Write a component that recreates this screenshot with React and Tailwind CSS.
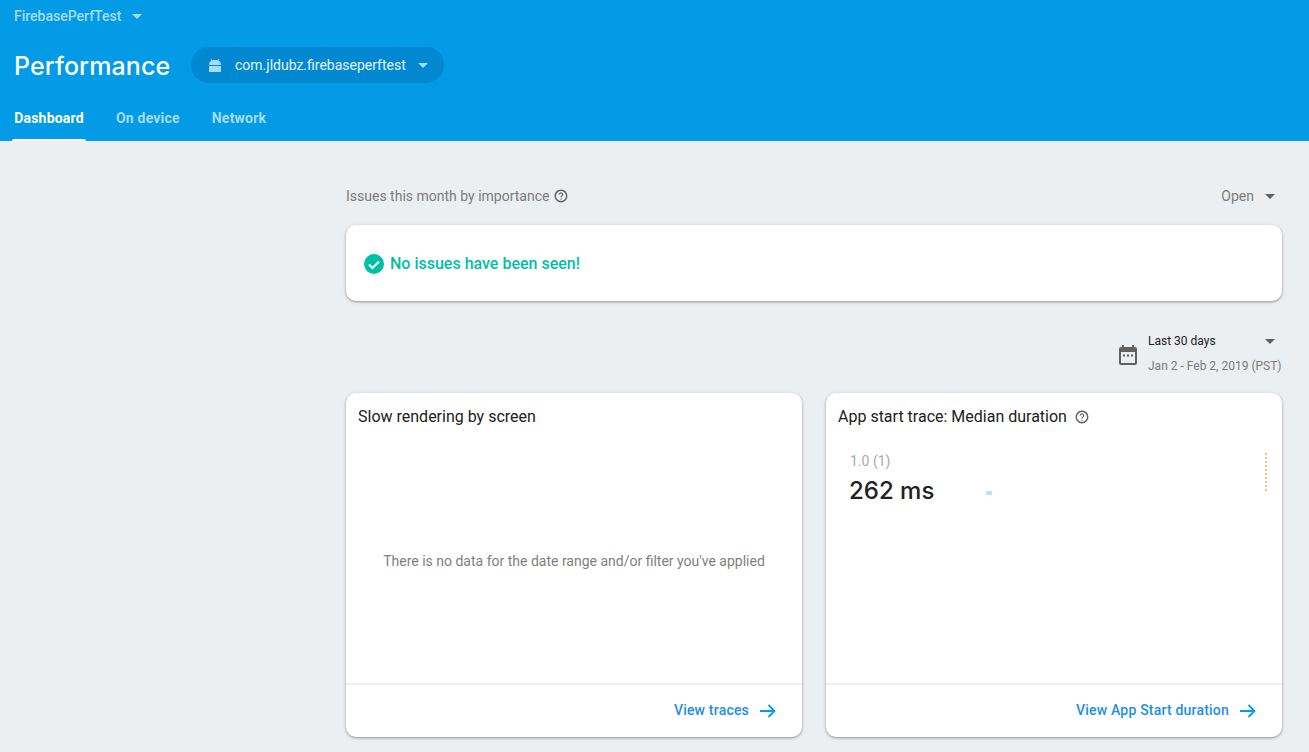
import React from "react"

const Caret = ({ className }) => (
    <svg className={className} width="10" height="5" viewBox="0 0 10 5" fill="currentColor">
        <path d="M0 0h10L5 5z" />
    </svg>
)

const Help = ({ className }) => (
    <svg className={className} width="14" height="14" viewBox="0 0 24 24" fill="currentColor">
        <path d="M12 1C5.900 1 1 5.900 1 12s4.900 11 11 11 11-4.900 11-11S18.100 1 12 1zm0 19.500c-4.700 0-8.500-3.800-8.500-8.500S7.300 3.500 12 3.500s8.500 3.800 8.500 8.500-3.800 8.500-8.500 8.500zM11 16.500h2v2h-2zM12 5.500c-2.200 0-4 1.800-4 4h2c0-1.100.9-2 2-2s2 .9 2 2c0 2-3 1.750-3 5h2c0-2.250 3-2.500 3-5 0-2.200-1.800-4-4-4z" />
    </svg>
)

const Arrow = () => (
    <svg width="16" height="14" viewBox="0 0 16 14" fill="none" stroke="#039be5" strokeWidth="1.8">
        <path d="M0 7h14.500M8.500 1l6 6-6 6" />
    </svg>
)

const Card = ({ children, link }) => (
    <div className="flex flex-col h-[344px] bg-white rounded-[10px] shadow-[0_1px_3px_rgba(0,0,0,0.4)]">
        <div className="flex-1 min-h-0 flex flex-col">{children}</div>
        <div className="h-[54px] border-t-2 border-[#eeeeee] flex items-center justify-end gap-[11px] pr-[26px] pb-[1px]">
            <span className="text-[14px] font-medium text-[#1e8fe5] tracking-[0.2px]">{link}</span>
            <Arrow />
        </div>
    </div>
)

export default function App() {
    return (
        <div className="h-[752px] overflow-hidden bg-[#eceff1] font-['Roboto',sans-serif]">
            <div className="h-[141px] bg-[#039be5] flex flex-col">
                <div className="h-[32px] pl-[14px] flex items-center gap-[10px] text-[#a6dcf6]">
                    <span className="text-[14px] font-medium">FirebasePerfTest</span>
                    <Caret className="mt-[1px] ml-[1px]" />
                </div>
                <div className="h-[36px] mt-[15px] pl-[14px] flex items-center">
                    <h1 className="text-[25px] leading-[36px] pt-[2px] tracking-[0.1px] font-medium text-white w-[177px] font-['Inter',sans-serif]">Performance</h1>
                    <div className="h-[36px] w-[253px] rounded-full bg-[#0288d1] flex items-center pl-[17px]">
                        <svg width="14" height="13" viewBox="0 0 14 13" fill="#a6dcf6">
                            <path d="M1 6C1 3.500 2.200 2.200 3.500 1.500L2.800.3l.4-.3 1.300 1.200C5.800.8 8.200.8 9.500 1.200L10.800 0l.4.3-.7 1.200C11.800 2.200 13 3.500 13 6zM1 7h12v5.500a.5.5 0 0 1-.5.5h-11a.5.5 0 0 1-.5-.5z" />
                        </svg>
                        <span className="ml-[13px] text-[14px] text-[#e3f3fc] font-normal">com.jldubz.firebaseperftest</span>
                        <Caret className="ml-[12px] text-[#a6dcf6]" />
                    </div>
                </div>
                <div className="flex-1 flex items-end pl-[12px] text-[14px] font-bold tracking-[0.2px]">
                    <div className="h-[44px] w-[74px] flex flex-col items-center justify-between text-white">
                        <span className="mt-[11px]">Dashboard</span>
                        <div className="w-full h-[2px] bg-white rounded-t-[2px]" />
                    </div>
                    <div className="h-[44px] ml-[30px] text-[#a6dcf6]">
                        <div className="mt-[11px]">On device</div>
                    </div>
                    <div className="h-[44px] ml-[32px] text-[#a6dcf6]">
                        <div className="mt-[11px]">Network</div>
                    </div>
                </div>
            </div>

            <div className="pl-[346px] pr-[27px]">
                <div className="h-[84px] flex items-start justify-between pt-[45px]">
                    <div className="flex items-center gap-[5px] text-[14px] leading-[20px] text-[#7b7b7b]">
                        <span>Issues this month by importance</span>
                        <Help className="text-[#616161]" />
                    </div>
                    <div className="flex items-center gap-[11px] text-[14px] leading-[20px] text-[#7b7b7b] pr-[7px]">
                        <span>Open</span>
                        <Caret className="text-[#616161]" />
                    </div>
                </div>

                <div className="h-[76px] bg-white rounded-[10px] shadow-[0_1px_3px_rgba(0,0,0,0.4)] flex items-center pl-[18px] pt-[1px] gap-[6px]">
                    <svg width="20" height="20" viewBox="0 0 20 20">
                        <circle cx="10" cy="10" r="10" fill="#00bfa5" />
                        <path d="M5 10.500l3.500 3.500L15 7.500" fill="none" stroke="#fff" strokeWidth="2.200" />
                    </svg>
                    <span className="text-[16px] font-medium text-[#00bfa5]">No issues have been seen!</span>
                </div>

                <div className="h-[92px] flex justify-end items-start pt-[29px]">
                    <div className="flex items-center">
                        <svg className="mr-[11px] mt-[5px]" width="18" height="20" viewBox="0 0 18 20" fill="#616161">
                            <path fillRule="evenodd" d="M3 0h2v2h8V0h2v2h1a2 2 0 0 1 2 2v14a2 2 0 0 1-2 2H2a2 2 0 0 1-2-2V4a2 2 0 0 1 2-2h1zM2 7v11h14V7z" />
                            <path d="M4 9.500h2v2H4zM8 9.500h2v2H8zM12 9.500h2v2h-2z" />
                        </svg>
                        <div className="w-[134px]">
                            <div className="flex items-center justify-between pr-[7px] h-[22px]">
                                <span className="text-[12px] text-[#212121]">Last 30 days</span>
                                <Caret className="text-[#616161]" />
                            </div>
                            <div className="text-[12px] text-[#7b7b7b] mt-[5px] whitespace-nowrap">Jan 2 - Feb 2, 2019 (PST)</div>
                        </div>
                    </div>
                </div>

                <div className="grid grid-cols-2 gap-[24px]">
                    <Card link="View traces">
                        <div className="pl-[12px] pt-[14px] text-[16px] text-[#212121] leading-[20px]">Slow rendering by screen</div>
                        <div className="flex-1 flex items-center justify-center pt-[13px] text-[14px] text-[#7f7f7f]">
                            There is no data for the date range and/or filter you've applied
                        </div>
                    </Card>
                    <Card link="View App Start duration">
                        <div className="pl-[12px] pt-[14px] flex items-center gap-[8px] text-[16px] text-[#212121] leading-[20px]">
                            <span>App start trace: Median duration</span>
                            <Help className="text-[#616161]" />
                        </div>
                        <div className="flex justify-between pl-[24px] pr-[15px] pt-[26px]">
                            <div className="flex items-end">
                                <div className="w-[136px]">
                                    <div className="text-[14px] text-[#aaaaaa] leading-[16px]">1.0 (1)</div>
                                    <div className="text-[24px] font-medium text-[#212121] leading-[32px] mt-[6px] -ml-[1px] font-['Inter',sans-serif]">262 ms</div>
                                </div>
                                <div className="w-[6px] h-[4px] bg-[#b3e5fc] mb-[12px]" />
                            </div>
                            <div className="h-[38px] border-r-2 border-dotted border-[#ffc078]" />
                        </div>
                    </Card>
                </div>
            </div>
        </div>
    )
}
